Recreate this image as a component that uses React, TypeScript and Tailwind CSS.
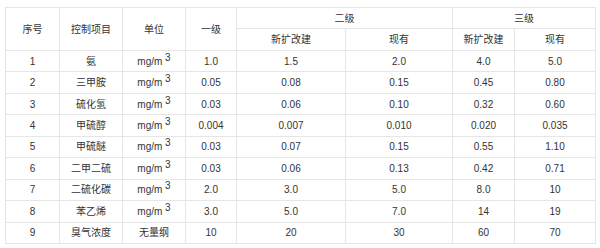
import React from "react";

const rows = [
  ["1", "氨", "mg", "1.0", "1.5", "2.0", "4.0", "5.0"],
  ["2", "三甲胺", "mg", "0.05", "0.08", "0.15", "0.45", "0.80"],
  ["3", "硫化氢", "mg", "0.03", "0.06", "0.10", "0.32", "0.60"],
  ["4", "甲硫醇", "mg", "0.004", "0.007", "0.010", "0.020", "0.035"],
  ["5", "甲硫醚", "mg", "0.03", "0.07", "0.15", "0.55", "1.10"],
  ["6", "二甲二硫", "mg", "0.03", "0.06", "0.13", "0.42", "0.71"],
  ["7", "二硫化碳", "mg", "2.0", "3.0", "5.0", "8.0", "10"],
  ["8", "苯乙烯", "mg", "3.0", "5.0", "7.0", "14", "19"],
  ["9", "臭气浓度", "无量纲", "10", "20", "30", "60", "70"],
];

const widths = [54, 63, 63, 51, 109, 107, 62, 81];

const cell = "border border-[#e6e6e6] text-center align-middle p-0";

function Unit({ u }: { u: string }) {
  if (u !== "mg") return <>{u}</>;
  return (
    <span>
      mg/m <sup className="text-[10px] -top-[4px]">3</sup>
    </span>
  );
}

export default function App() {
  return (
    <div className="w-[600px] h-[248px] bg-white pt-[7px] pl-[5px]">
      <table
        className="border-collapse table-fixed text-[10px] text-[#333]"
        style={{ width: 589 }}
      >
        <colgroup>
          {widths.map((w, i) => (
            <col key={i} style={{ width: w }} />
          ))}
        </colgroup>
        <thead className="font-['Liberation_Sans','Noto_Sans_CJK_SC',sans-serif]">
          <tr className="h-[21px]">
            <th rowSpan={2} className={`${cell} font-normal`}>序号</th>
            <th rowSpan={2} className={`${cell} font-normal`}>控制项目</th>
            <th rowSpan={2} className={`${cell} font-normal`}>单位</th>
            <th rowSpan={2} className={`${cell} font-normal`}>一级</th>
            <th colSpan={2} className={`${cell} font-normal`}>二级</th>
            <th colSpan={2} className={`${cell} font-normal`}>三级</th>
          </tr>
          <tr className="h-[22px]">
            <th className={`${cell} font-normal`}>新扩改建</th>
            <th className={`${cell} font-normal`}>现有</th>
            <th className={`${cell} font-normal`}>新扩改建</th>
            <th className={`${cell} font-normal`}>现有</th>
          </tr>
        </thead>
        <tbody className="font-['Liberation_Sans','Noto_Sans_CJK_SC',sans-serif]">
          {rows.map((r) => (
            <tr key={r[0]} className="h-[21.45px]">
              {r.map((c, i) => (
                <td key={i} className={cell}>
                  {i === 2 ? <Unit u={c} /> : c}
                </td>
              ))}
            </tr>
          ))}
        </tbody>
      </table>
    </div>
  );
}
